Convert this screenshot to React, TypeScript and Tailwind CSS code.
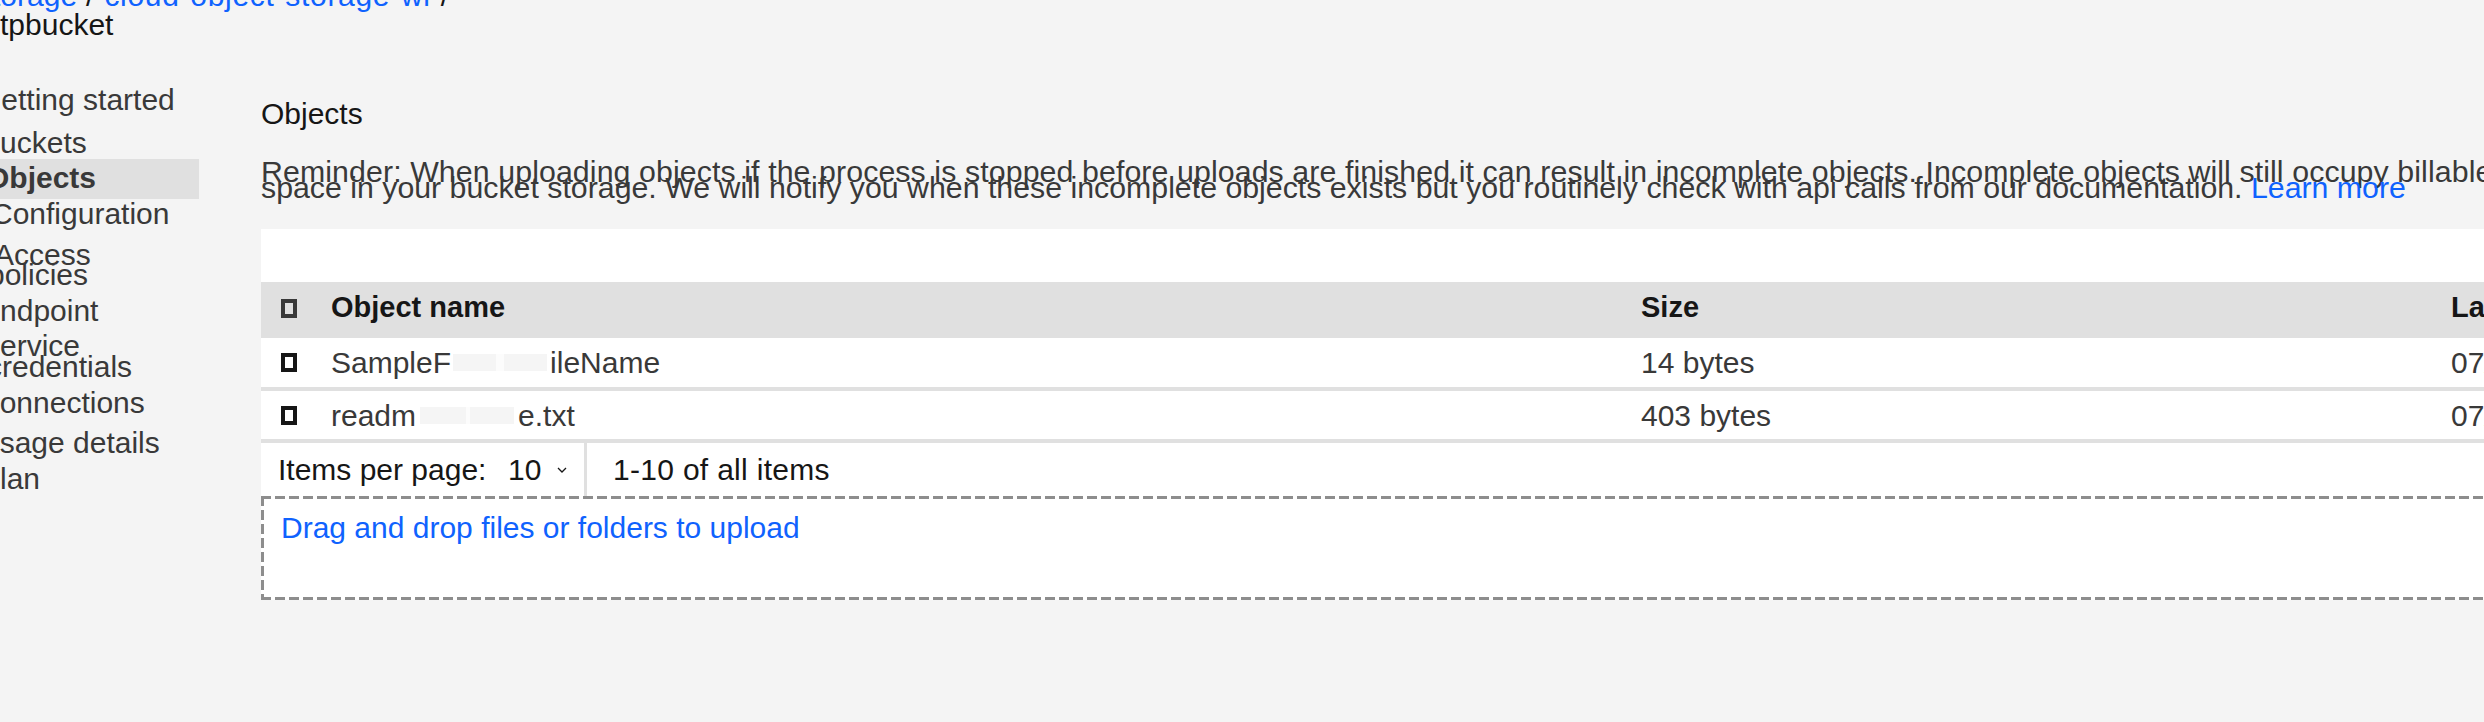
import React from "react";

function Box({ dark }: { dark?: boolean }) {
  return (
    <span
      className={
        dark
          ? "block w-[16px] h-[19px] border-[4px] border-[#161616]"
          : "block w-[16px] h-[19px] border-[4px] border-[#393939]"
      }
    />
  );
}

function Chevron() {
  return (
    <svg width="10" height="6" viewBox="0 0 10 6" className="block">
      <path d="M1 1l4 4 4-4" fill="none" stroke="#161616" strokeWidth="1.3" />
    </svg>
  );
}

export default function App() {
  return (
    <div className="w-[2484px] h-[722px] overflow-hidden bg-[#f4f4f4] [font-family:'Liberation_Sans',Arial,sans-serif] text-[30px] text-[#161616]">
      {/* breadcrumb */}
      <div className="-mt-[19px] h-[29px] -ml-[28px] leading-[30px] whitespace-nowrap">
        <span className="text-[#0f62fe]">Storage</span>
        <span className="ml-[9px] mr-[10px]">/</span>
        <span className="text-[#0f62fe] tracking-[0.7px]">cloud-object-storage-wi</span>
        <span className="ml-[10px]">/</span>
      </div>
      <div className="leading-[30px] whitespace-nowrap">tpbucket</div>

      <div className="flex">
        {/* side nav */}
        <nav className="w-[261px] shrink-0 text-[#393939] whitespace-nowrap leading-[20px]">
          <div className="mt-[50px] -ml-[22px]">Getting started</div>
          <div className="mt-[23px] -ml-[20px]">Buckets</div>
          <div className="mt-[6px] w-[199px] h-[40px] pt-[9px] bg-[#e0e0e0] font-bold text-[#393939]">
            <div className="-ml-[14px]">Objects</div>
          </div>
          <div className="mt-[5px] -ml-[9px]">Configuration</div>
          <div className="mt-[21px]">
            <div className="-ml-[6px]">Access</div>
            <div className="-ml-[12px]">policies</div>
          </div>
          <div className="mt-[16px] -ml-[20px]">Endpoint</div>
          <div className="mt-[15px]">
            <div className="-ml-[20px]">Service</div>
            <div className="mt-[1px] -ml-[13px]">credentials</div>
          </div>
          <div className="mt-[16px] -ml-[22px]">Connections</div>
          <div className="mt-[20px] -ml-[22px]">Usage details</div>
          <div className="mt-[16px] -ml-[20px]">Plan</div>
        </nav>

        {/* main */}
        <main className="w-[2300px] shrink-0 pt-[59px]">
          <h2 className="leading-[30px] whitespace-nowrap">Objects</h2>
          <div className="mt-[35px] leading-[16px] text-[30.3px] text-[#393939] whitespace-nowrap">
            <div className="tracking-[0.1px]">
              Reminder: When uploading objects if the process is stopped before uploads are finished it can result in incomplete objects. Incomplete objects will still occupy billable
            </div>
            <div>
              space in your bucket storage. We will notify you when these incomplete objects exists but you routinely check with api calls from our documentation.{" "}
              <span className="text-[#0f62fe]">Learn more</span>
            </div>
          </div>

          <div className="mt-[33px] bg-white">
            <div className="h-[53px]" />
            {/* header */}
            <div className="h-[52px] bg-[#e0e0e0] flex items-center font-bold text-[29px] whitespace-nowrap">
              <div className="w-[52px] shrink-0 pl-[20px]">
                <Box />
              </div>
              <div className="w-[1310px] shrink-0 pl-[18px]">Object name</div>
              <div className="w-[813px] shrink-0 pl-[18px]">Size</div>
              <div className="pl-[15px]">Last modified</div>
            </div>
            {/* row 1 */}
            <div className="h-[53px] border-t-[4px] border-[#e0e0e0] flex items-center text-[#393939] whitespace-nowrap">
              <div className="w-[52px] shrink-0 pl-[20px]">
                <Box dark />
              </div>
              <div className="w-[1310px] shrink-0 pl-[18px] flex items-center">
                <span>SampleF</span>
                <span className="ml-[2px] w-[43px] h-[17px] bg-[#f5f5f5]" />
                <span className="w-[8px] h-[17px] bg-[#fcfcfc]" />
                <span className="w-[43px] h-[17px] bg-[#f5f5f5]" />
                <span className="ml-[3px]">ileName</span>
              </div>
              <div className="w-[813px] shrink-0 pl-[18px]">14 bytes</div>
              <div className="pl-[15px]">07/14/2021</div>
            </div>
            {/* row 2 */}
            <div className="h-[52px] border-t-[4px] border-[#e0e0e0] flex items-center text-[#393939] whitespace-nowrap">
              <div className="w-[52px] shrink-0 pl-[20px]">
                <Box dark />
              </div>
              <div className="w-[1310px] shrink-0 pl-[18px] flex items-center">
                <span>readm</span>
                <span className="ml-[4px] w-[46px] h-[17px] bg-[#f5f5f5]" />
                <span className="w-[4px] h-[17px] bg-[#fcfcfc]" />
                <span className="w-[44px] h-[17px] bg-[#f5f5f5]" />
                <span className="ml-[4px]">e.txt</span>
              </div>
              <div className="w-[813px] shrink-0 pl-[18px]">403 bytes</div>
              <div className="pl-[15px]">07/14/2021</div>
            </div>
            {/* pagination */}
            <div className="h-[57px] border-t-[4px] border-[#e0e0e0] flex items-stretch whitespace-nowrap">
              <div className="w-[247px] shrink-0 pl-[17px] flex items-center">Items per page:</div>
              <div className="w-[49px] shrink-0 flex items-center">10</div>
              <div className="w-[27px] shrink-0 flex items-center">
                <Chevron />
              </div>
              <div className="w-[3px] shrink-0 bg-[#e0e0e0]" />
              <div className="pl-[26px] flex items-center tracking-[0.3px]">1-10 of all items</div>
            </div>
            {/* drop zone */}
            <div className="h-[104px] pl-[20px] pt-[17px] leading-[30px] text-[#0f62fe] whitespace-nowrap bg-no-repeat [background-image:repeating-linear-gradient(90deg,#8d8d8d_0_10px,transparent_10px_14px),repeating-linear-gradient(90deg,#8d8d8d_0_10px,transparent_10px_14px),repeating-linear-gradient(180deg,#8d8d8d_0_10px,transparent_10px_14px)] [background-size:100%_3px,100%_3px,3px_100%] [background-position:0_0,0_100%,0_0]">
              Drag and drop files or folders to upload
            </div>
          </div>
        </main>
      </div>
    </div>
  );
}
